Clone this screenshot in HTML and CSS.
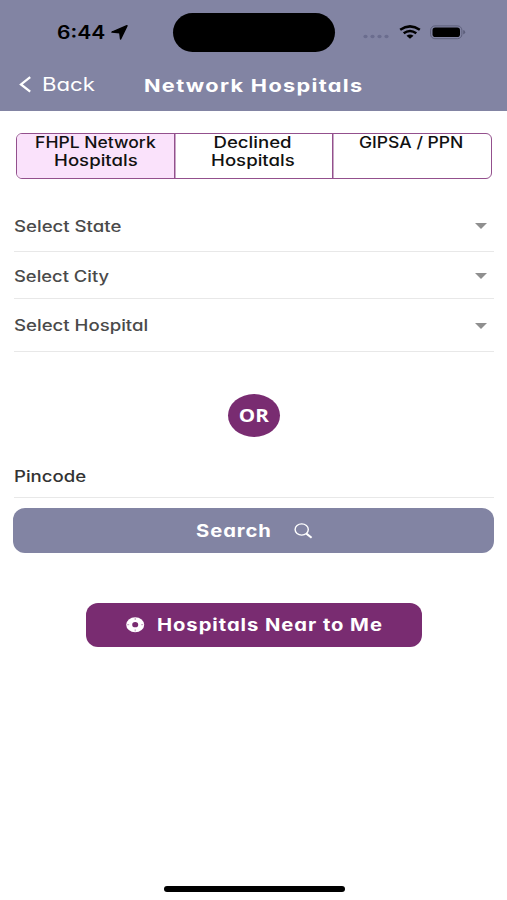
FILE: index.html
```html
<!DOCTYPE html>
<html lang="en">
<head>
<meta charset="utf-8">
<meta name="viewport" content="width=device-width, initial-scale=1">
<title>Network Hospitals</title>
<link rel="stylesheet" href="styles.css">
</head>
<body>
<div class="screen">
  <header class="header">
    <div class="status">
      <div class="clock"><span class="wide time">6:44</span>
        <svg class="locate" width="17" height="15" viewBox="0 0 17 15"><path d="M15.9.8 1 7.1l7.8.6.8 6.2z" stroke="#000" stroke-width="1.5" stroke-linejoin="round"/></svg>
      </div>
      <div class="island"></div>
      <div class="indicators">
        <svg class="dots" width="26" height="5" viewBox="0 0 26 5"><g fill="#6b6d8e"><ellipse cx="2.5" cy="2.5" rx="2.1" ry="1.8"/><ellipse cx="9.5" cy="2.5" rx="2.1" ry="1.8"/><ellipse cx="16.5" cy="2.5" rx="2.1" ry="1.8"/><ellipse cx="23.5" cy="2.5" rx="2.1" ry="1.8"/></g></svg>
        <svg class="wifi" width="22" height="14" viewBox="0 0 22 14"><g fill="none" stroke="#000" stroke-width="2.5"><path d="M1.2 4.8Q11-2.1 20.8 4.8"/><path d="M4.7 8.3Q11 3.7 17.3 8.3"/></g><path d="M7.5 10.8Q11 8.2 14.5 10.8L11 13.7z"/></svg>
        <svg class="battery" width="36" height="15" viewBox="0 0 36 15"><rect x=".6" y=".9" width="31.3" height="12.8" rx="4.3" fill="none" stroke="#5d5f7b"/><rect x="2.5" y="2.6" width="27.5" height="9.4" rx="2.8"/><path d="M33.2 5q2 .6 2 2.2t-2 2.2z" fill="#5d5f7b"/></svg>
      </div>
    </div>
    <nav class="nav">
      <a class="back"><svg width="13" height="17" viewBox="0 0 13 17"><path d="M11.2 1.2 2 8.4l9.2 7.2" fill="none" stroke="#fff" stroke-width="2.3"/></svg><span class="wide">Back</span></a>
      <h1 class="title wide">Network Hospitals</h1>
    </nav>
  </header>
  <main class="main">
    <div class="tabs">
      <div class="tab active"><span class="wide snug">FHPL Network</span><span class="wide">Hospitals</span></div>
      <div class="tab"><span class="wide">Declined</span><span class="wide">Hospitals</span></div>
      <div class="tab"><span class="wide snug">GIPSA / PPN</span></div>
    </div>
    <div class="field state"><span class="wide">Select State</span><i class="caret"></i></div>
    <div class="field city"><span class="wide">Select City</span><i class="caret"></i></div>
    <div class="field hospital"><span class="wide">Select Hospital</span><i class="caret"></i></div>
    <div class="or"><span>OR</span></div>
    <div class="field pincode"><span class="wide">Pincode</span></div>
    <div class="button search"><span class="wide">Search</span>
      <svg width="19" height="16" viewBox="0 0 19 16"><ellipse cx="7.7" cy="6.5" rx="6.6" ry="5.6" fill="none" stroke="#fff" stroke-width="1.4"/><path d="m12.4 10.6 5.2 4.2" stroke="#fff" stroke-width="2"/></svg>
    </div>
    <div class="button near">
      <svg width="19" height="16" viewBox="0 0 19 16"><ellipse cx="9.2" cy="7.7" rx="9" ry="7.5" fill="#fff"/><ellipse cx="9.2" cy="7.7" rx="3" ry="2.6" fill="#792c71"/><path d="M9.2 1v2m0 9.4v2M1.2 7.7h2m12 0h2" stroke="#b98bb4" stroke-width=".9"/></svg>
      <span class="wide">Hospitals Near to Me</span>
    </div>
  </main>
  <div class="home"></div>
</div>
</body>
</html>
```
FILE: styles.css
```css
* { box-sizing: border-box; }
body { margin: 0; background: #fff; font-family: Inter, "Noto Sans", sans-serif; font-feature-settings: "cv11"; }
.screen { width: 507px; height: 900px; display: flex; flex-direction: column; overflow: hidden; }
.wide { display: inline-block; white-space: nowrap; transform: scaleX(1.2); transform-origin: left center; }
.header { height: 111.4px; background: #8284a3; flex: none; }
.status { height: 64px; display: grid; grid-template-columns: 173px 162px 1fr; align-items: center; }
.clock { display: flex; align-items: center; padding-left: 57px; font-size: 18px; font-weight: 600; }
.time { width: 54px; transform: scaleX(1.17); }
.island { height: 39px; border-radius: 20px; background: #000; }
.indicators { display: flex; align-items: center; padding-left: 28px; }
.dots { margin-top: 9px; }
.wifi { margin-left: 10px; }
.battery { margin-left: 9px; }
.nav { height: 40px; display: flex; align-items: center; color: #fff; }
.back { display: flex; align-items: center; gap: 10px; width: 144px; padding-left: 19px; font-size: 18px; font-weight: 400; }
.back .wide { transform: scaleX(1.23); }
.title { margin: 2px 0 0; font-size: 18px; font-weight: 700; letter-spacing: 1.1px; transform: scaleX(1.206); }
.main { flex: 1; padding: 21.6px 13px 0 14px; display: flex; flex-direction: column; }
.tabs { height: 46px; margin: 0 2px; display: grid; grid-template-columns: 157px 158px 1fr; border: 1.5px solid #93508d; border-radius: 6px; overflow: hidden; flex: none; }
.tab { display: flex; flex-direction: column; align-items: center; font-size: 15.5px; line-height: 18px; font-weight: 500; color: #111; }
.tab .wide { transform-origin: center; }
.tab .snug { transform: scaleX(1.13); }
.tab + .tab { box-shadow: inset 1.5px 0 #93508d; }
.active { background: #fae2fb; }
.field { display: flex; align-items: center; justify-content: space-between; border-bottom: 1px solid #e8e8e8; padding-top: 2px; font-size: 15.5px; font-weight: 500; color: #4a4a4a; flex: none; }
.caret { border: 6.5px solid transparent; border-top: 6px solid #8f8f8f; border-bottom: 0; margin-right: 7px; }
.state { height: 53px; margin-top: 20px; }
.state .wide, .city .wide { margin-top: 2px; }
.city { height: 47px; }
.city .wide { transform: scaleX(1.185); }
.hospital { height: 53px; padding-top: 1px; }
.hospital .caret { margin-top: 1px; }
.or { width: 52px; height: 43px; border-radius: 50%; margin: 42px 0 0 214px; background: #792c71; color: #fff; display: flex; align-items: center; justify-content: center; font: 700 17.5px "Open Sans", sans-serif; flex: none; }
.or span { transform: scaleX(1.18); margin-bottom: 1px; }
.pincode { height: 44px; margin-top: 17px; color: #333; }
.button { height: 44.4px; border-radius: 12px; color: #fff; display: flex; align-items: center; font-size: 17px; font-weight: 700; flex: none; letter-spacing: 0.8px; }
.button .wide { transform: scaleX(1.188); }
.search { margin-top: 10.4px; margin-left: -1px; background: #8284a3; padding-left: 183px; }
.search .wide { width: 98px; }
.near { width: 336.5px; margin: 50px 0 0 71.5px; background: #792c71; padding-left: 40.5px; gap: 12px; }
.home { width: 181px; height: 6px; border-radius: 3px; background: #000; margin: 0 0 8px 164px; flex: none; }
```
